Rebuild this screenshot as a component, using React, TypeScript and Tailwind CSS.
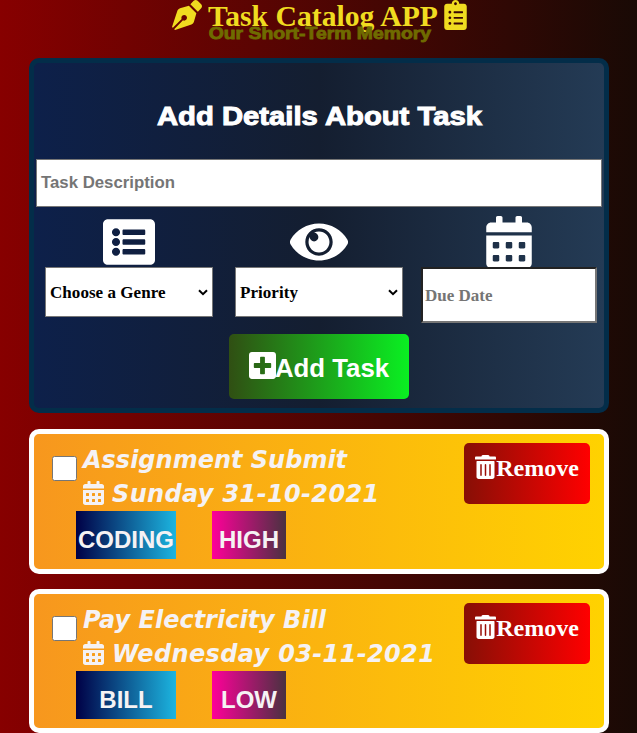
import type { ReactNode } from "react";
import {
  FaCalendarAlt,
  FaClipboardList,
  FaListAlt,
  FaPenNib,
  FaPlusSquare,
} from "react-icons/fa";

type Task = { title: string; date: string; genre: string; priority: string };

const tasks: Task[] = [
  { title: "Assignment Submit", date: "Sunday 31-10-2021", genre: "CODING", priority: "HIGH" },
  { title: "Pay Electricity Bill", date: "Wednesday 03-11-2021", genre: "BILL", priority: "LOW" },
];

const serif = "font-['Liberation_Serif',serif]";
const sans = "font-['Liberation_Sans',sans-serif]";

function EyeIcon({ className }: { className: string }) {
  return (
    <svg viewBox="0 0 576 512" fill="currentColor" className={className}>
      <path d="M569.354 231.631C512.969 135.949 407.81 72 288 72 168.14 72 63.004 135.994 6.646 231.631a47.999 47.999 0 0 0 0 48.739C63.031 376.051 168.19 440 288 440c119.86 0 224.996-63.994 281.354-159.631a47.997 47.997 0 0 0 0-48.738zM288 392c-75.162 0-136-60.827-136-136 0-75.162 60.826-136 136-136 75.162 0 136 60.826 136 136 0 75.162-60.826 136-136 136zm104-136c0 57.438-46.562 104-104 104s-104-46.562-104-104c0-17.708 4.431-34.379 12.236-48.973l-.001.032c0 23.651 19.173 42.823 42.824 42.823s42.824-19.173 42.824-42.823c0-23.651-19.173-42.824-42.824-42.824l-.032.001C253.621 156.431 270.292 152 288 152c57.438 0 104 46.562 104 104z" />
    </svg>
  );
}

function TrashIcon({ className }: { className: string }) {
  return (
    <svg viewBox="0 0 448 512" fill="currentColor" className={className}>
      <path d="M0 84V56c0-13.3 10.7-24 24-24h112l9.4-18.7c4-8.2 12.3-13.3 21.4-13.3h114.3c9.1 0 17.4 5.1 21.5 13.3L312 32h112c13.3 0 24 10.7 24 24v28c0 6.6-5.4 12-12 12H12C5.4 96 0 90.6 0 84zm416 56v324c0 26.5-21.5 48-48 48H80c-26.5 0-48-21.5-48-48V140c0-6.6 5.4-12 12-12h360c6.6 0 12 5.4 12 12zm-272 68c0-8.8-7.2-16-16-16s-16 7.2-16 16v224c0 8.8 7.2 16 16 16s16-7.2 16-16V208zm96 0c0-8.8-7.2-16-16-16s-16 7.2-16 16v224c0 8.8 7.2 16 16 16s16-7.2 16-16V208zm96 0c0-8.8-7.2-16-16-16s-16 7.2-16 16v224c0 8.8 7.2 16 16 16s16-7.2 16-16V208z" />
    </svg>
  );
}

function Picker({ label, icon }: { label: string; icon: ReactNode }) {
  return (
    <div className="flex w-[168px] flex-col items-center">
      {icon}
      <div className={`flex h-[50px] w-full items-center justify-between border border-[#767676] bg-white pr-1 pl-1 text-[17px] font-bold text-black ${serif}`}>
        <span className="pt-0.5 tracking-[0.05px]">{label}</span>
        <svg width="10" height="7" viewBox="0 0 10 7" fill="none" stroke="black" strokeWidth="2">
          <path d="M1 1.2 5 5.2 9 1.2" />
        </svg>
      </div>
    </div>
  );
}

function TaskCard({ task }: { task: Task }) {
  return (
    <article className="flex h-36 justify-between rounded-[10px] border-[5px] border-white bg-linear-to-r/srgb from-[#f7971e] to-[#ffd200] first:h-[145px]">
      <div className="flex pl-[18px]">
        <span className="mt-[22px] size-[25px] shrink-0 rounded-[2.5px] border border-[#767676] bg-white" />
        <div className="-ml-px pt-[9px] text-[#f5f2f4]">
          <div className="pl-[7px] font-['DejaVu_Sans',sans-serif] text-2xl leading-[34px] font-bold whitespace-nowrap italic">
            <p>{task.title}</p>
            <p className="flex items-center tracking-[0.35px]">
              <FaCalendarAlt className="mr-2 mb-[2px] h-6 w-[21px]" />
              {task.date}
            </p>
          </div>
          <div className={`flex gap-9 text-2xl font-bold ${sans}`}>
            <span className="flex h-12 w-[100px] items-center justify-center bg-linear-to-r/srgb from-[#000046] to-[#1cb5e0] pt-[9px]">
              {task.genre}
            </span>
            <span className="flex h-12 w-[74px] items-center justify-center bg-linear-to-r/srgb from-[#ff0099] to-[#493240] pt-[9px]">
              {task.priority}
            </span>
          </div>
        </div>
      </div>
      <button className={`mt-[9px] mr-3.5 flex h-[61px] w-[126px] items-start justify-center rounded-[5px] bg-linear-to-r/srgb from-[#870f06] to-[#ff0000] pt-3 text-2xl leading-[27px] font-bold text-white ${serif}`}>
        <TrashIcon className="h-6 w-[21px]" />
        Remove
      </button>
    </article>
  );
}

export default function App() {
  return (
    <div className="h-[733px] w-[637px] overflow-hidden bg-linear-to-r/srgb from-[#870000] to-[#190a05]">
      <header className="flex h-[58px] flex-col items-center pl-[2px]">
        <h1 className={`flex h-8 items-center gap-1.5 text-[29.7px] leading-8 font-bold whitespace-nowrap text-[#f0dc20] ${serif}`}>
          <FaPenNib className="mb-[2px] size-[30px]" />
          <span>Task Catalog APP</span>
          <FaClipboardList className="mb-[2px] h-[30px] w-[23px]" />
        </h1>
        <p className={`-mt-[7px] origin-center scale-x-[1.21] text-base leading-[18px] font-bold whitespace-nowrap text-[#6f6b00] [-webkit-text-stroke:0.8px_#6f6b00] ${sans}`}>
          Our Short-Term Memory
        </p>
      </header>
      <main className="ml-[29px] w-[580px]">
        <section className="h-[355px] rounded-[10px] border-[5px] border-[#032d49] bg-linear-to-r/srgb from-[#0d204a] via-[#141e30] to-[#243b55]">
          <h2 className={`pt-[37px] text-center text-[26px] leading-8 font-bold whitespace-nowrap text-white ${sans}`}>
            <span className="inline-block scale-x-[1.125] [-webkit-text-stroke:1px_white]">Add Details About Task</span>
          </h2>
          <div className={`mt-[27px] ml-[2px] flex h-12 w-[566px] items-center border border-[#767676] bg-white pl-1 text-[16.8px] leading-[24px] font-bold text-[#757575] ${sans}`}>
            Task Description
          </div>
          <div className="mt-[9px] flex pl-[11px]">
            <Picker label="Choose a Genre" icon={<FaListAlt className="-mb-px size-[52px] text-white" />} />
            <div className="w-[22px]" />
            <Picker label="Priority" icon={<EyeIcon className="-mb-px h-[52px] w-[58px] text-white" />} />
            <div className="ml-[18px] flex w-[176px] flex-col items-center">
              <FaCalendarAlt className="-mb-px h-[52px] w-[46px] text-white" />
              <div className={`flex h-14 w-full items-center border-2 border-t-[#222] border-r-[#767676] border-b-[#767676] border-l-[#222] bg-white pt-0.5 pl-[2px] text-[17px] font-bold text-[#757575] ${serif}`}>
                Due Date
              </div>
            </div>
          </div>
          <button className={`mx-auto mt-[11px] flex h-[65px] w-[180px] items-center justify-center rounded-[5px] bg-linear-to-r/srgb from-[#304f13] to-[#0af022] text-[25.8px] font-bold text-white ${sans}`}>
            <FaPlusSquare className="-mt-[3px] -mr-px h-[31px] w-[27px]" />
            <span className="pt-1">Add Task</span>
          </button>
        </section>
        <div className="mt-4 flex flex-col gap-[15px]">
          {tasks.map((task) => (
            <TaskCard key={task.title} task={task} />
          ))}
        </div>
      </main>
    </div>
  );
}
